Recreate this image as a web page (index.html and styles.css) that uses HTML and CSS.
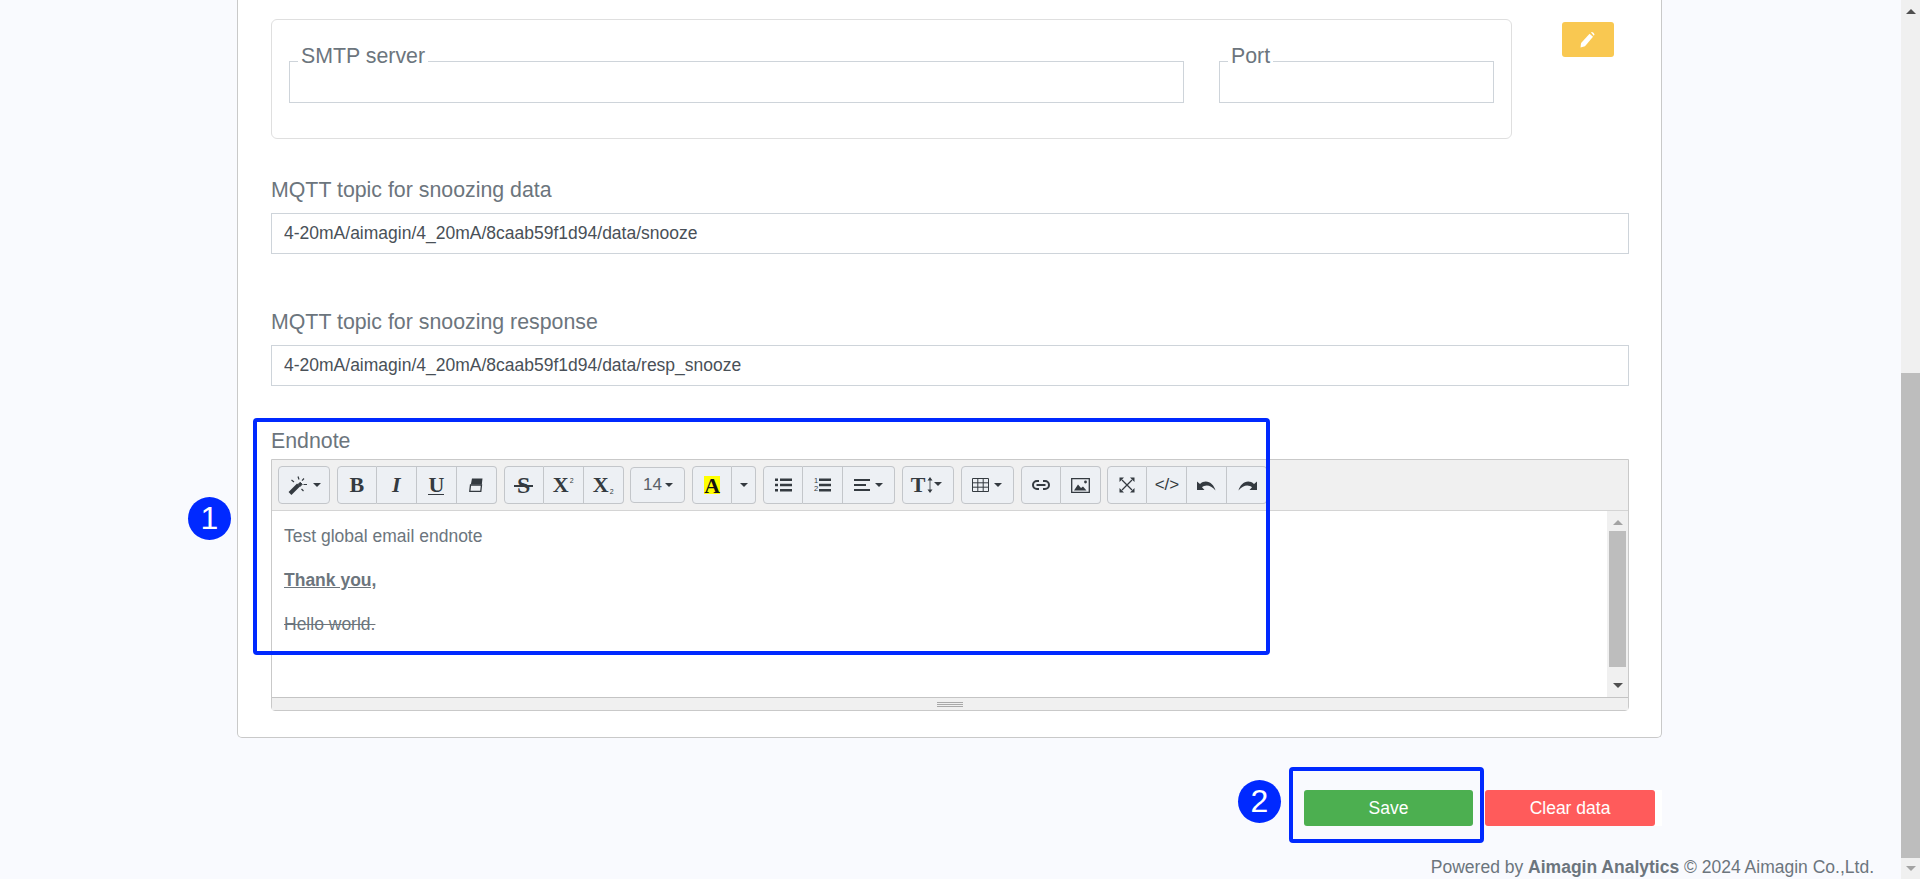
FILE: index.html
```html
<!DOCTYPE html>
<html lang="en">
<head>
    <meta charset="UTF-8">
    <meta name="viewport" content="width=device-width, initial-scale=1.0">
    <title>Email settings | Aimagin Analytics</title>
    <link rel="stylesheet" href="styles.css">
</head>
<body>
    <div class="page-main">
        <section class="card">
            <div class="smtp-row">
                <div class="smtp-panel">
                    <fieldset class="field field-server">
                        <legend>SMTP server</legend>
                    </fieldset>
                    <fieldset class="field field-port">
                        <legend>Port</legend>
                    </fieldset>
                </div>
                <button class="edit-btn" title="Edit">
                    <svg viewBox="0 0 16 16" width="16" height="16" fill="#fff">
                        <path d="M0.5 15.5l0.6-4.4L9.6 1.7l3.4 3L5 14.2z"></path>
                        <path d="M11 0.6l0.8-0.5c0.9 0 2.6 1.4 2.7 2.6l-0.7 1z"></path>
                    </svg>
                </button>
            </div>

            <label class="form-label label-data">MQTT topic for snoozing data</label>
            <input class="form-input" type="text" value="4-20mA/aimagin/4_20mA/8caab59f1d94/data/snooze">

            <label class="form-label label-response">MQTT topic for snoozing response</label>
            <input class="form-input" type="text" value="4-20mA/aimagin/4_20mA/8caab59f1d94/data/resp_snooze">

            <label class="form-label label-endnote">Endnote</label>
            <div class="editor">
                <div class="toolbar">
                    <div class="tool-group">
                        <button class="tool w52">
                            <svg viewBox="0 0 20 20" width="20" height="20" fill="none" stroke="#343a40">
                                <path d="M2 18.5L10.5 10" stroke-width="4"></path>
                                <path d="M10 9.5l2.2-2.2 2 2-2.2 2.2z" fill="#343a40" stroke-width="1"></path>
                                <path d="M10 1.5l1 3M3.5 5l2.5 2M16 3.5l-2 2.2M15.500 9.500h3.500M13.500 14l2 2" stroke-width="1.200"></path>
                            </svg>
                            <span class="caret"></span>
                        </button>
                    </div>
                    <div class="tool-group">
                        <button class="tool glyph"><b>B</b></button>
                        <button class="tool glyph"><b><i>I</i></b></button>
                        <button class="tool glyph"><b class="under">U</b></button>
                        <button class="tool">
                            <svg viewBox="0 0 14 14" width="14" height="14" fill="#343a40">
                                <path d="M3 0.500h10.500L12.800 6.500H1.800z"></path>
                                <path d="M1.500 7h11l-0.700 6.300H0.800z" fill="none" stroke="#343a40" stroke-width="1.300"></path>
                            </svg>
                        </button>
                    </div>
                    <div class="tool-group">
                        <button class="tool glyph"><b class="strike">S</b></button>
                        <button class="tool glyph"><b>X</b><small class="sup">2</small></button>
                        <button class="tool glyph"><b>X</b><small class="sub">2</small></button>
                    </div>
                    <div class="tool-group">
                        <button class="tool w55 size-tool">14<span class="caret"></span></button>
                    </div>
                    <div class="tool-group">
                        <button class="tool glyph"><b class="highlight">A</b></button>
                        <button class="tool w24"><span class="caret"></span></button>
                    </div>
                    <div class="tool-group">
                        <button class="tool">
                            <svg viewBox="0 0 17 14" width="17" height="14" fill="#343a40">
                                <path d="M0 0.500h3v2.500H0zM5 0.500h12v2.500H5zM0 5.800h3v2.500H0zM5 5.800h12v2.500H5zM0 11h3v2.500H0zM5 11h12v2.500H5z"></path>
                            </svg>
                        </button>
                        <button class="tool ol-tool">
                            <span class="ol-nums"><span>1</span><span>2</span></span>
                            <svg viewBox="0 0 12 14" width="12" height="14" fill="#343a40">
                                <path d="M0 0.500h12v2.500H0zM0 5.800h12v2.500H0zM0 11h12v2.500H0z"></path>
                            </svg>
                        </button>
                        <button class="tool w52">
                            <svg viewBox="0 0 16 12" width="16" height="12" fill="#343a40">
                                <path d="M0 0h16v2H0zM0 5h12v2H0zM0 10h16v2H0z"></path>
                            </svg>
                            <span class="caret"></span>
                        </button>
                    </div>
                    <div class="tool-group">
                        <button class="tool w52 height-tool">
                            <b class="tall-t">T</b>
                            <svg viewBox="0 0 6 16" width="6" height="16" fill="#343a40">
                                <path d="M3 0L5.500 3.500H3.400V12.500H5.500L3 16L0.500 12.500H2.600V3.500H0.500z"></path>
                            </svg>
                            <span class="caret"></span>
                        </button>
                    </div>
                    <div class="tool-group">
                        <button class="tool w53">
                            <svg viewBox="0 0 17 14" width="17" height="14" fill="none" stroke="#343a40">
                                <path d="M0.500 0.500h16v13h-16zM0.500 4.800h16M0.500 9.200h16M5.800 0.500v13M11.200 0.500v13"></path>
                            </svg>
                            <span class="caret"></span>
                        </button>
                    </div>
                    <div class="tool-group">
                        <button class="tool">
                            <svg viewBox="0 0 18 12" width="18" height="12" fill="none" stroke="#343a40" stroke-width="2">
                                <path d="M7 2H5a4 4 0 0 0 0 8h2M11 2h2a4 4 0 0 1 0 8h-2M4.500 6h9"></path>
                            </svg>
                        </button>
                        <button class="tool">
                            <svg viewBox="0 0 19 15" width="19" height="15" fill="none" stroke="#343a40">
                                <path d="M0.700 0.700h17.600v13.600H0.700z" stroke-width="1.300"></path>
                                <path d="M3 12.500l4-6 3 3.500 2-1.500 3.500 4z" fill="#343a40" stroke="none"></path>
                                <circle cx="14.500" cy="4" r="1.400" fill="#343a40" stroke="none"></circle>
                            </svg>
                        </button>
                    </div>
                    <div class="tool-group">
                        <button class="tool">
                            <svg viewBox="0 0 16 16" width="16" height="16" fill="#343a40" stroke="#343a40">
                                <path d="M3 3l10 10M13 3L3 13" stroke-width="1.300" fill="none"></path>
                                <path d="M0.500 0.500h4.500l-4.500 4.500zM15.500 0.500h-4.500l4.500 4.500zM0.500 15.500h4.500l-4.500-4.500zM15.500 15.500h-4.500l4.500-4.500z" stroke="none"></path>
                            </svg>
                        </button>
                        <button class="tool code-tool">&lt;/&gt;</button>
                        <button class="tool">
                            <svg viewBox="0 0 20 12" width="20" height="12" fill="#343a40">
                                <path d="M0 2.500V11h7.500L5 8.300C7.500 5.800 13.500 5 18.500 11.500 17 5 9.500-1 3 5z"></path>
                            </svg>
                        </button>
                        <button class="tool">
                            <svg viewBox="0 0 20 12" width="20" height="12" fill="#343a40">
                                <path d="M20 2.500V11h-7.500L15 8.300C12.500 5.800 6.500 5 1.500 11.500 3 5 10.500-1 17 5z"></path>
                            </svg>
                        </button>
                    </div>
                </div>
                <div class="editor-body">
                    <div class="editable">
                        <p>Test global email endnote</p>
                        <p><b><u>Thank you,</u></b></p>
                        <p><s>Hello world.</s></p>
                    </div>
                    <div class="scrollbar editor-scroll">
                        <span class="arrow-up faded"></span>
                        <div class="scroll-track"><div class="scroll-thumb"></div></div>
                        <span class="arrow-down"></span>
                    </div>
                </div>
                <div class="statusbar"><span class="resizer"></span></div>
            </div>
        </section>

        <div class="actions">
            <button class="btn btn-save">Save</button>
            <div class="clear-wrap"><button class="btn btn-clear">Clear data</button></div>
        </div>

        <footer class="footer">Powered by <b>Aimagin Analytics</b> &copy; 2024 Aimagin Co.,Ltd.</footer>

        <div class="mark mark-editor"></div>
        <div class="mark mark-save"></div>
        <div class="step step-one">1</div>
        <div class="step step-two">2</div>
    </div>

    <div class="scrollbar page-scroll">
        <span class="arrow-up"></span>
        <div class="scroll-track"><div class="scroll-thumb"></div></div>
        <span class="arrow-down faded"></span>
    </div>
</body>
</html>
```

FILE: styles.css
```css
:root {
    --page: #f9fafe;
    --card: #ffffff;
    --text: #6c757d;
    --input-text: #495057;
    --line: #ced4da;
    --card-line: #c9c9c9;
    --panel-line: #dfdfdf;
    --tool: #edf0f4;
    --tool-line: #c3c6ca;
    --icon: #343a40;
    --bar: #f0f0f0;
    --blue: #0029ff;
}

* {
    margin: 0;
    padding: 0;
    box-sizing: border-box;
}

html, body {
    height: 879px;
    overflow: hidden;
}

body {
    display: flex;
    background: var(--page);
    color: var(--text);
    font-family: "Liberation Sans", Arial, sans-serif;
}

.page-main {
    position: relative;
    flex: 1;
}

.card {
    width: 1425px;
    height: 738px;
    margin-left: 237px;
    padding: 19px 33px 0;
    background: var(--card);
    border: 1px solid var(--card-line);
    border-top: none;
    border-radius: 0 0 5px 5px;
}

.smtp-row {
    display: flex;
    align-items: flex-start;
}

.smtp-panel {
    display: flex;
    gap: 35px;
    width: 1241px;
    height: 120px;
    padding: 24px 17px 0;
    border: 1px solid var(--panel-line);
    border-radius: 6px;
}

.field {
    height: 59px;
    border: 1px solid var(--line);
}

.field legend {
    margin-left: 8px;
    padding: 0 3px 10px;
    font-size: 21.33px;
    line-height: 24px;
}

.field-server {
    width: 895px;
}

.field-port {
    width: 275px;
}

.edit-btn {
    display: flex;
    align-items: center;
    justify-content: center;
    width: 52px;
    height: 35px;
    margin: 3px 0 0 50px;
    background: #f9c851;
    border: none;
    border-radius: 3px;
}

.form-label {
    display: block;
    font-size: 21.33px;
    line-height: 30px;
}

.label-data {
    margin: 36px 0 8px;
}

.label-response {
    margin: 53px 0 8px;
}

.label-endnote {
    margin: 40px 0 3px;
}

.form-input {
    display: block;
    width: 1358px;
    height: 41px;
    padding: 0 12px;
    background: var(--card);
    border: 1px solid var(--line);
    color: var(--input-text);
    font-family: inherit;
    font-size: 17.5px;
}

.editor {
    width: 1358px;
    height: 252px;
    border: 1px solid var(--card-line);
    border-radius: 0 0 4px 4px;
    display: flex;
    flex-direction: column;
}

.toolbar {
    display: flex;
    gap: 6.83px;
    height: 51px;
    padding: 6px 6px 0;
    background: var(--bar);
    border-bottom: 1px solid #d4d4d4;
}

.tool-group {
    display: flex;
    height: 38px;
}

.tool {
    display: flex;
    align-items: center;
    justify-content: center;
    gap: 5px;
    width: 40px;
    height: 38px;
    background: var(--tool);
    border: 1px solid var(--tool-line);
    border-left-width: 0;
    color: var(--icon);
    font-family: "Liberation Serif", serif;
    font-size: 22px;
}

.tool:first-child {
    border-left-width: 1px;
    border-radius: 4px 0 0 4px;
}

.tool:last-child {
    border-radius: 0 4px 4px 0;
}

.tool:only-child {
    border-radius: 4px;
}

.w24 { width: 24px; }
.w52 { width: 52px; }
.w53 { width: 53px; }
.w55 { width: 55px; }

.caret {
    width: 0;
    height: 0;
    border-left: 4px solid transparent;
    border-right: 4px solid transparent;
    border-top: 4px solid var(--icon);
}

.under {
    border-bottom: 1px solid var(--icon);
    line-height: 19px;
}

.strike {
    position: relative;
    font-size: 24px;
}

.strike::after {
    content: "";
    position: absolute;
    left: -3px;
    right: -3px;
    top: 50%;
    height: 2px;
    background: var(--icon);
}

.glyph small {
    align-self: center;
    margin-left: -4px;
    font-family: "Liberation Sans", sans-serif;
    font-size: 7px;
}

.glyph .sup {
    margin-bottom: 10px;
}

.glyph .sub {
    margin-top: 13px;
}

.size-tool {
    gap: 3px;
    height: 36px;
    margin-top: 1px;
    color: #596067;
    font-family: "Liberation Sans", sans-serif;
    font-size: 17px;
}

.highlight {
    display: block;
    width: 16px;
    height: 18px;
    background: #ffff00;
    color: #111111;
    line-height: 19px;
    text-align: center;
}

.height-tool {
    gap: 2px;
    padding-right: 3px;
}

.height-tool .caret {
    margin-left: -1px;
    margin-bottom: 3px;
}

.tall-t {
    font-size: 22px;
}

.ol-tool {
    gap: 1px;
}

.ol-nums {
    display: flex;
    flex-direction: column;
    font-family: "Liberation Sans", sans-serif;
    font-size: 7.5px;
    line-height: 8px;
}

.code-tool {
    font-family: "Liberation Sans", sans-serif;
    font-size: 17px;
}

.editor-body {
    display: flex;
    flex: 1;
    background: var(--card);
    border-bottom: 1px solid #c4c4c4;
    min-height: 0;
}

.editable {
    flex: 1;
    padding: 13px 12px 0;
    font-size: 17.500px;
    line-height: 24px;
}

.editable p {
    margin-bottom: 20px;
}

.statusbar {
    display: flex;
    align-items: center;
    justify-content: center;
    height: 12px;
    background: var(--bar);
}

.resizer {
    width: 26px;
    height: 5px;
    border-top: 1px solid #a9a9a9;
    border-bottom: 1px solid #a9a9a9;
    background: linear-gradient(#a9a9a9, #a9a9a9) center / 100% 1px no-repeat;
}

.scrollbar {
    display: flex;
    flex-direction: column;
    align-items: center;
    background: var(--bar);
}

.scroll-track {
    flex: 1;
    width: 100%;
}

.scroll-thumb {
    background: #bdbdbd;
}

.arrow-up,
.arrow-down {
    width: 0;
    height: 0;
    border-left: 5px solid transparent;
    border-right: 5px solid transparent;
}

.arrow-up {
    border-bottom: 5px solid #505050;
}

.arrow-down {
    border-top: 5px solid #505050;
}

.arrow-up.faded {
    border-bottom-color: #a3a3a3;
}

.arrow-down.faded {
    border-top-color: #a3a3a3;
}

.editor-scroll {
    width: 21px;
    padding: 9px 0;
}

.editor-scroll .scroll-track {
    padding: 6px 2px 13px 2px;
}

.editor-scroll .scroll-thumb {
    height: 136px;
}

.page-scroll {
    width: 19px;
    height: 879px;
    padding: 9px 0 8px;
}

.page-scroll .scroll-track {
    padding-top: 359px;
}

.page-scroll .scroll-thumb {
    height: 485px;
}

.actions {
    display: flex;
    justify-content: flex-end;
    align-items: flex-start;
    gap: 12px;
    width: 1425px;
    margin: 52px 0 0 237px;
}

.clear-wrap {
    padding-right: 7px;
    background: var(--card);
}

.btn {
    display: block;
    width: 170px;
    height: 36px;
    border: none;
    border-radius: 3px;
    color: #ffffff;
    font-family: inherit;
    font-size: 17.500px;
}

.btn-save {
    width: 169px;
    background: #4caf50;
}

.btn-clear {
    background: #ff5b5b;
}

.footer {
    margin-top: 29px;
    padding-right: 27px;
    font-size: 17.500px;
    line-height: 24px;
    text-align: right;
}

.mark {
    position: absolute;
    border: 4px solid var(--blue);
    border-radius: 4px;
}

.mark-editor {
    left: 253px;
    top: 418px;
    width: 1017px;
    height: 237px;
}

.mark-save {
    left: 1289px;
    top: 767px;
    width: 195px;
    height: 76px;
}

.step {
    position: absolute;
    display: flex;
    align-items: center;
    justify-content: center;
    width: 43px;
    height: 43px;
    background: var(--blue);
    border-radius: 50%;
    color: #ffffff;
    font-size: 32px;
}

.step-one {
    left: 188px;
    top: 497px;
}

.step-two {
    left: 1238px;
    top: 780px;
}
```
